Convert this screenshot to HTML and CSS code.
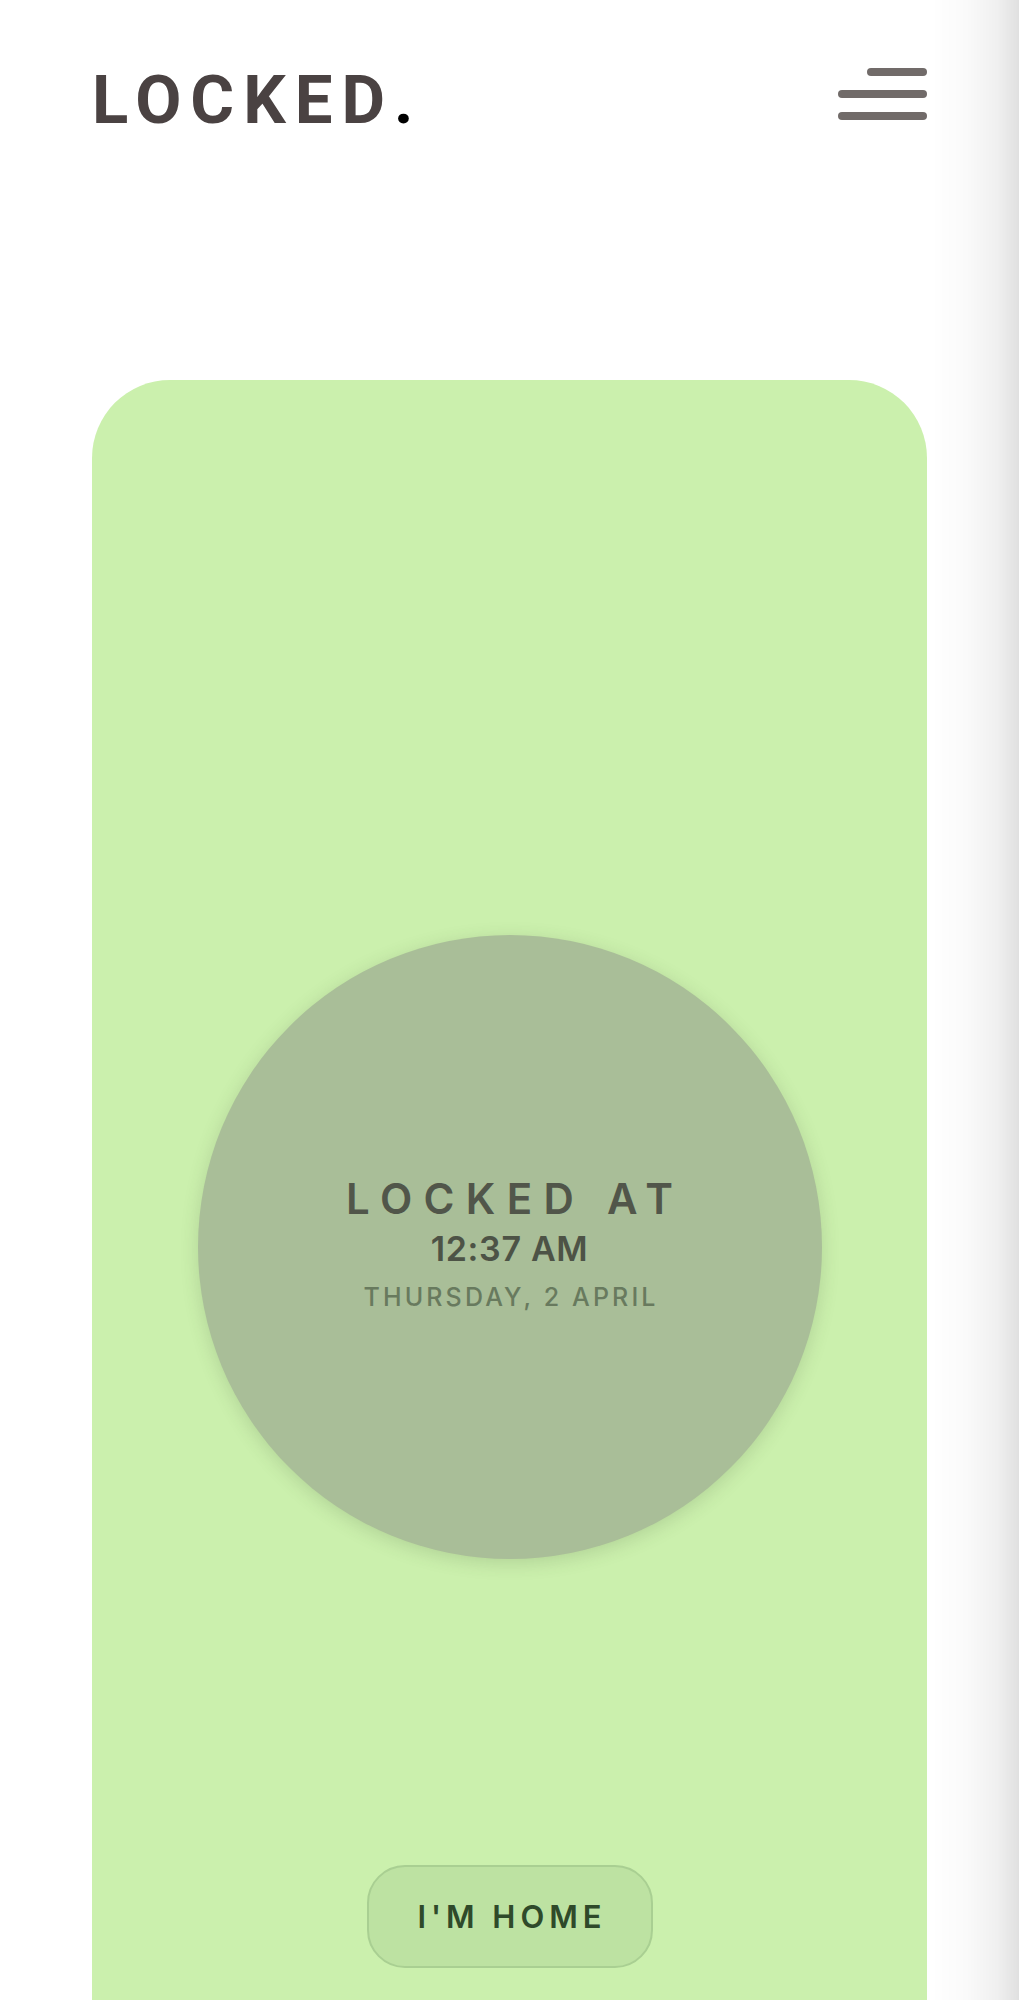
FILE: index.html
```html
<!DOCTYPE html>
<html lang="en">
<head>
<meta charset="utf-8">
<title>Locked.</title>
<link rel="stylesheet" href="styles.css">
</head>
<body>
<div class="page">
  <header class="header">
    <div class="logo">LOCKED<span class="logo-dot">.</span></div>
    <button class="menu" aria-label="Menu">
      <span class="bar bar-short"></span>
      <span class="bar"></span>
      <span class="bar"></span>
    </button>
  </header>
  <main class="card">
    <div class="circle">
      <div class="locked-at">LOCKED AT</div>
      <div class="time">12:37 AM</div>
      <div class="date">THURSDAY, 2 APRIL</div>
    </div>
    <button class="home-btn">I'M HOME</button>
  </main>
</div>
<div class="edge-shadow"></div>
</body>
</html>
```
FILE: styles.css
```css
html, body {
  margin: 0;
  padding: 0;
  background: #ffffff;
}

.page {
  padding: 0 92px;
  min-height: 2000px;
  box-sizing: border-box;
  display: flex;
  flex-direction: column;
}

.header {
  display: flex;
  justify-content: space-between;
  align-items: flex-start;
  padding-top: 67px;
}

.logo {
  font-family: Roboto, "Liberation Sans", sans-serif;
  font-weight: 700;
  font-size: 67px;
  line-height: 67px;
  letter-spacing: 9px;
  color: #4a4242;
}

.logo-dot {
  color: #000000;
  letter-spacing: 0;
  margin-left: 0;
}

.menu {
  margin: 1px 0 0 0;
  padding: 0;
  border: 0;
  background: transparent;
  width: 89px;
  display: flex;
  flex-direction: column;
  align-items: flex-end;
  gap: 14px;
}

.bar {
  display: block;
  width: 89px;
  height: 8px;
  border-radius: 4px;
  background: #716b69;
}

.bar-short {
  width: 60px;
}

.card {
  margin-top: 246px;
  flex: 1;
  background: #cbf0ad;
  border-radius: 78px 78px 0 0;
  padding-top: 555px;
  display: flex;
  flex-direction: column;
  align-items: center;
}

.circle {
  width: 624px;
  height: 624px;
  border-radius: 50%;
  background: #a9be98;
  box-shadow: 0 4px 18px rgba(60, 80, 50, 0.18);
  display: flex;
  flex-direction: column;
  align-items: center;
  justify-content: center;
  font-family: Inter, "Open Sans", sans-serif;
  text-align: center;
}

.locked-at {
  font-size: 42px;
  line-height: 52px;
  font-weight: 600;
  letter-spacing: 0.27em;
  margin-right: -0.27em;
  color: #51564a;
}

.time {
  font-size: 34px;
  line-height: 48px;
  font-weight: 600;
  letter-spacing: 0.02em;
  color: #4d5346;
}

.date {
  font-size: 25px;
  line-height: 48px;
  font-weight: 500;
  letter-spacing: 0.125em;
  margin-right: -0.125em;
  color: #687a5e;
}

.home-btn {
  margin-top: 306px;
  width: 286px;
  height: 103px;
  box-sizing: border-box;
  border: 2px solid #a9cf92;
  border-radius: 38px;
  background: #bde2a2;
  font-family: Inter, "Open Sans", sans-serif;
  font-weight: 600;
  font-size: 31px;
  letter-spacing: 0.16em;
  padding: 0 0 0 0.16em;
  color: #2f4a2a;
}

.edge-shadow {
  position: fixed;
  top: 0;
  right: 0;
  bottom: 0;
  width: 88px;
  pointer-events: none;
  background: linear-gradient(to right, rgba(0,0,0,0) 0%, rgba(0,0,0,0.02) 40%, rgba(0,0,0,0.06) 75%, rgba(0,0,0,0.12) 100%);
}
```
